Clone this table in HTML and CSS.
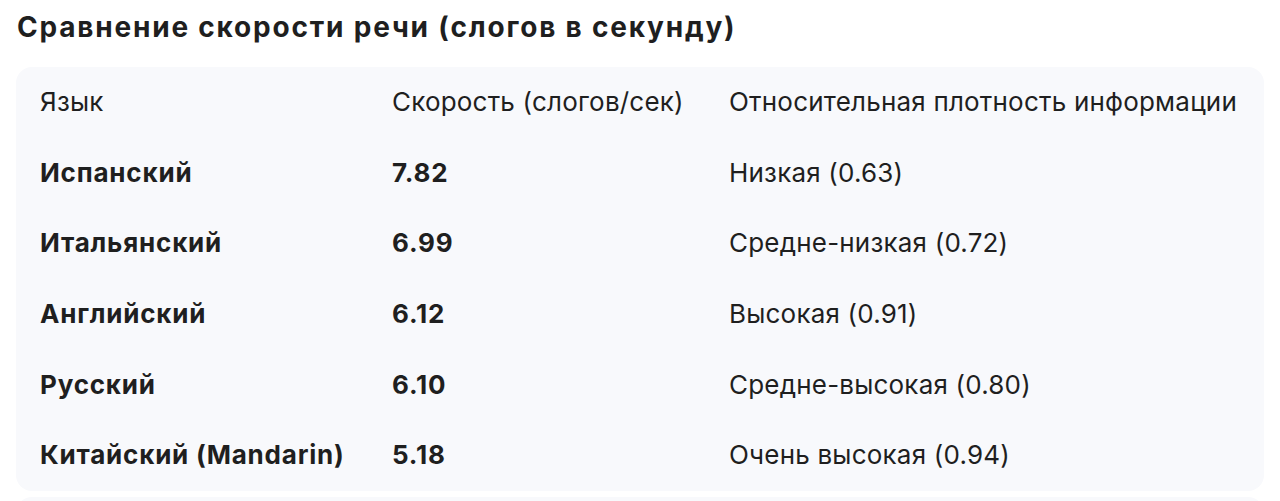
FILE: index.html
```html
<!DOCTYPE html>
<html lang="ru">
<head>
<meta charset="utf-8">
<link rel="stylesheet" href="styles.css">
</head>
<body>
<h2 class="title">Сравнение скорости речи (слогов в секунду)</h2>
<div class="card">
  <table class="tbl">
    <thead>
      <tr><th class="c1">Язык</th><th class="c2">Скорость (слогов/сек)</th><th class="c3">Относительная плотность информации</th></tr>
    </thead>
    <tbody>
      <tr><td class="c1 b">Испанский</td><td class="c2 b">7.82</td><td class="c3">Низкая (0.63)</td></tr>
      <tr><td class="c1 b">Итальянский</td><td class="c2 b">6.99</td><td class="c3">Средне-низкая (0.72)</td></tr>
      <tr><td class="c1 b">Английский</td><td class="c2 b">6.12</td><td class="c3">Высокая (0.91)</td></tr>
      <tr><td class="c1 b">Русский</td><td class="c2 b">6.10</td><td class="c3">Средне-высокая (0.80)</td></tr>
      <tr><td class="c1 b">Китайский (Mandarin)</td><td class="c2 b">5.18</td><td class="c3">Очень высокая (0.94)</td></tr>
    </tbody>
  </table>
</div>
<div class="next"></div>
</body>
</html>
```
FILE: styles.css
```css
html, body { margin: 0; padding: 0; background: #ffffff; }
body { font-family: Inter, "Noto Sans", sans-serif; color: #1f1f1f; padding: 0 16px; overflow: hidden; height: 501px; }
.title { margin: 0; padding: 10px 0 0 1px; height: 54px; box-sizing: border-box; font-size: 28px; font-weight: 700; line-height: 34px; letter-spacing: 1.8px; }
.card { background: #f8f9fc; border-radius: 16px; margin-top: 13px; width: 1248px; }
.tbl { border-collapse: collapse; width: 100%; table-layout: fixed; }
.tbl th, .tbl td { height: 70.6px; padding: 0; font-size: 26px; line-height: 32px; text-align: left; vertical-align: middle; font-weight: 400; white-space: nowrap; letter-spacing: 0.2px; }
.c1 { width: 352px; padding-left: 24px !important; }
.c2 { width: 337px; }
.tbl .b { font-weight: 700; letter-spacing: 0.8px; }
.next { background: #f8f9fc; height: 20px; margin-top: 6px; border-radius: 16px 16px 0 0; width: 1248px; }
```
